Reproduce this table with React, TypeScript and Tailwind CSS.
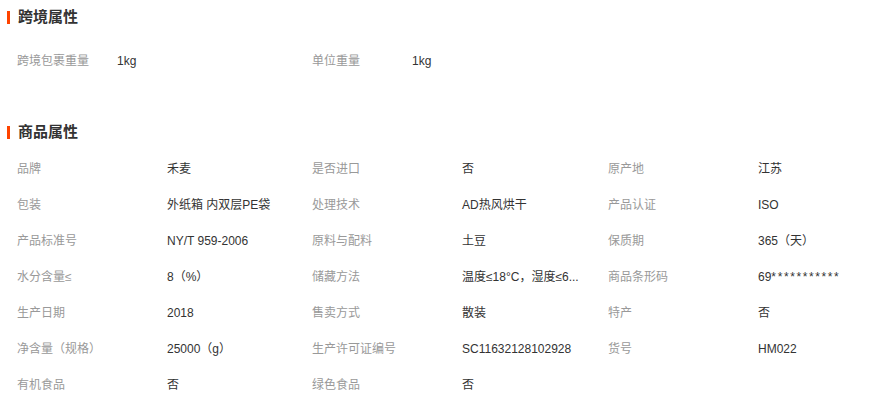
import React from "react";

const font = { fontFamily: '"Liberation Sans", "Noto Sans CJK SC", sans-serif' };

function Header({ title }: { title: string }) {
  return (
    <div className="flex items-center h-6 pl-[7px]">
      <span className="w-[3px] h-[13px] bg-[#ff4400]" />
      <span className="ml-[8px] text-[15px] font-bold text-[#333]">{title}</span>
    </div>
  );
}

const cross: [string, string][] = [
  ["跨境包裹重量", "1kg"],
  ["单位重量", "1kg"],
];

const goods: [string, React.ReactNode][] = [
  ["品牌", "禾麦"],
  ["是否进口", "否"],
  ["原产地", "江苏"],
  ["包装", "外纸箱 内双层PE袋"],
  ["处理技术", "AD热风烘干"],
  ["产品认证", "ISO"],
  ["产品标准号", "NY/T 959-2006"],
  ["原料与配料", "土豆"],
  ["保质期", "365（天）"],
  ["水分含量≤", "8（%）"],
  ["储藏方法", "温度≤18°C，湿度≤6..."],
  [
    "商品条形码",
    <>
      69<span className="tracking-[1.6px]">***********</span>
    </>,
  ],
  ["生产日期", "2018"],
  ["售卖方式", "散装"],
  ["特产", "否"],
  ["净含量（规格）", "25000（g）"],
  ["生产许可证编号", "SC11632128102928"],
  ["货号", "HM022"],
  ["有机食品", "否"],
  ["绿色食品", "否"],
];

export default function App() {
  return (
    <div className="w-[878px] h-[396px] bg-white overflow-hidden" style={font}>
      <div className="pt-[5px]">
        <Header title="跨境属性" />
        <div className="mt-[14px] pl-[17px] grid grid-cols-[295px_296px_1fr] text-[12px]">
          {cross.map(([k, v]) => (
            <div key={k} className="flex items-center h-9">
              <span className="w-[100px] text-[#999]">{k}</span>
              <span className="text-[#333]">{v}</span>
            </div>
          ))}
        </div>
        <div className="mt-[41px]">
          <Header title="商品属性" />
        </div>
        <div className="mt-[7px] pl-[17px] grid grid-cols-[295px_296px_1fr] text-[12px]">
          {goods.map(([k, v]) => (
            <div key={k} className="flex items-center h-9">
              <span className="w-[150px] shrink-0 text-[#999]">{k}</span>
              <span className="text-[#333] whitespace-nowrap">{v}</span>
            </div>
          ))}
        </div>
      </div>
    </div>
  );
}
